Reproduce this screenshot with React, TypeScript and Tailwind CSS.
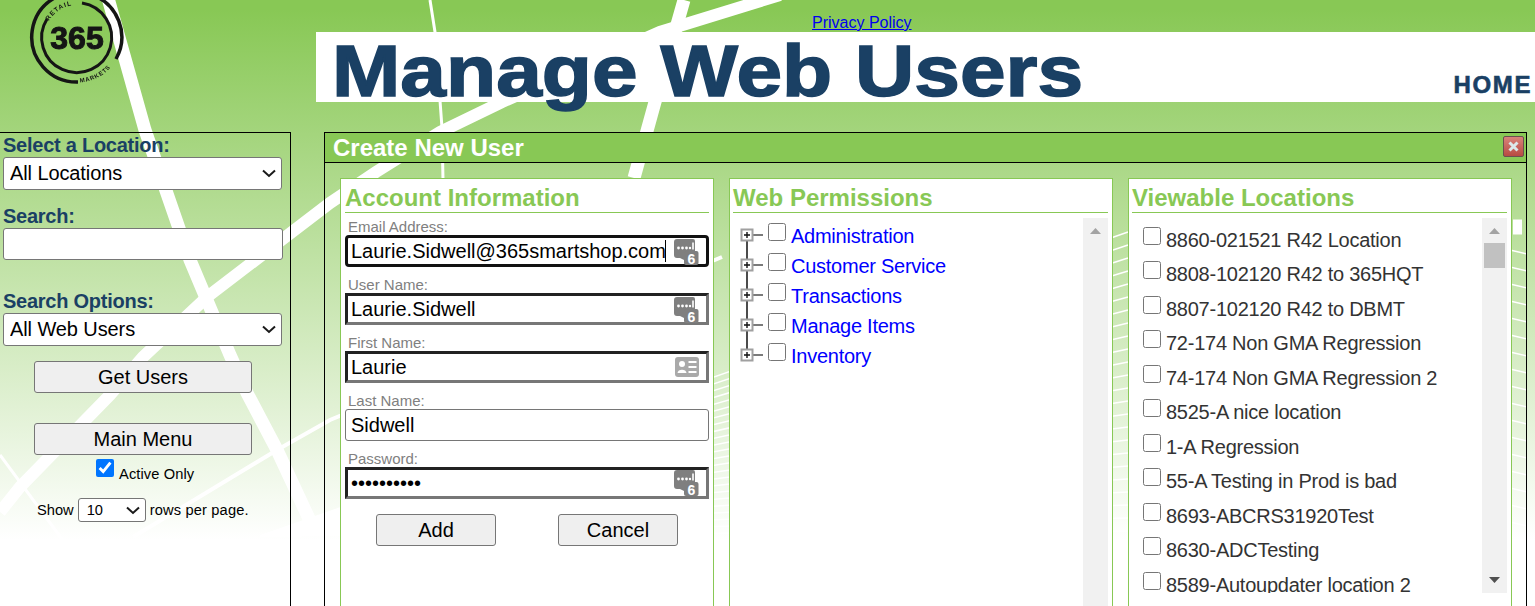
import React from 'react'

const tree = ['Administration', 'Customer Service', 'Transactions', 'Manage Items', 'Inventory']

const locations = [
  '8860-021521 R42 Location',
  '8808-102120 R42 to 365HQT',
  '8807-102120 R42 to DBMT',
  '72-174 Non GMA Regression',
  '74-174 Non GMA Regression 2',
  '8525-A nice location',
  '1-A Regression',
  '55-A Testing in Prod is bad',
  '8693-ABCRS31920Test',
  '8630-ADCTesting',
  '8589-Autoupdater location 2',
]

const fanLeft = Array.from({ length: 24 }, (_, i) => 232 + i * 13)
const fanRight = Array.from({ length: 20 }, (_, i) => 250 + i * 17)

function Background() {
  return (
    <svg className="absolute inset-0" width="1535" height="606" viewBox="0 0 1535 606" fill="none" stroke="#fff">
      <path d="M108 -2 L145 130 L190 260 L230 355 L247 393 L277 450 L312 525" strokeWidth="13" />
      <path d="M0 512 L20 487 L110 395 L143 357 L207 297 L330 203 L376 172 L440 132 L502 102 L660 32 L780 -5" strokeWidth="12" />
      <path d="M430 0 L435 32 L442 128 L443 180" strokeWidth="3" />
      <path d="M684 0 L655 102 L634 178" strokeWidth="13" />
      <path d="M0 455 L70 550" strokeWidth="3" />
      <path d="M133 537 L277 450 L330 420 L722 257" strokeWidth="4" />
      <path d="M1513 227 L1522 227" strokeWidth="15" />
      {fanLeft.map((y) => (
        <line key={y} x1="260" y1="536" x2="1128" y2={y} strokeWidth="1.5" />
      ))}
      {fanRight.map((y) => (
        <line key={y} x1="1510" y1={y} x2="1527" y2={y + 4} strokeWidth="1.5" />
      ))}
    </svg>
  )
}

function Logo() {
  return (
    <svg width="130" height="90" viewBox="0 0 130 90" className="block blur-[0.4px]" fill="none" stroke="#151515">
      <path d="M116 60 A45 45 0 1 0 78 83" strokeWidth="3.5" />
      <path d="M82 4 A35 35 0 1 1 47 20" strokeWidth="3" />
      <path id="retailArc" d="M49 22 A32 32 0 0 1 80 6" stroke="none" />
      <path id="marketsArc" d="M80 83.5 A45 45 0 0 0 116 61" stroke="none" />
      <text fontSize="6.5" fontWeight="700" fill="#151515" stroke="none" letterSpacing="1">
        <textPath href="#retailArc">RETAIL</textPath>
      </text>
      <text fontSize="6" fontWeight="700" fill="#151515" stroke="none" letterSpacing="0.8">
        <textPath href="#marketsArc">MARKETS</textPath>
      </text>
      <text x="77" y="50" textAnchor="middle" fontSize="32" fontWeight="700" fill="#151515" stroke="#151515" strokeWidth="1">
        365
      </text>
    </svg>
  )
}

function SixIcon({ className }: { className: string }) {
  return (
    <svg width="25" height="30" viewBox="0 0 25 30" className={className}>
      <path d="M3 1 H19 a2 2 0 0 1 2 2 V18 H10 V22 L6 20 H3 a3 3 0 0 1 -3 -3 V4 a3 3 0 0 1 3 -3 Z" fill="#7f7f7f" />
      <rect x="10" y="13" width="14.5" height="14" rx="2" fill="#7f7f7f" />
      <circle cx="4.5" cy="10" r="1.4" fill="#fff" />
      <circle cx="8.5" cy="10" r="1.4" fill="#fff" />
      <circle cx="12.5" cy="10" r="1.4" fill="#fff" />
      <circle cx="16" cy="10" r="1.2" fill="#fff" />
      <rect x="18.2" y="4.5" width="1.6" height="7" fill="#fff" />
      <text x="17.5" y="25.5" textAnchor="middle" fontSize="14" fontWeight="700" fill="#fff">6</text>
    </svg>
  )
}

function CardIcon({ className }: { className: string }) {
  return (
    <svg width="25" height="21" viewBox="0 0 25 21" className={className}>
      <rect x="0" y="0" width="24" height="20" rx="3" fill="#a9a9a9" />
      <circle cx="7" cy="7" r="3" fill="#fff" />
      <path d="M2.5 16 C2.5 11.5 11.5 11.5 11.5 16 Z" fill="#fff" />
      <rect x="13.5" y="4" width="8" height="2" fill="#fff" />
      <rect x="13.5" y="9" width="8" height="2" fill="#fff" />
      <rect x="13.5" y="14" width="8" height="2" fill="#fff" />
    </svg>
  )
}

function Chevron({ className }: { className: string }) {
  return (
    <svg width="14" height="9" viewBox="0 0 14 9" fill="none" className={`absolute pointer-events-none ${className}`}>
      <path d="M1 1.5 L7 7 L13 1.5" stroke="#1a1a1a" strokeWidth="2" />
    </svg>
  )
}

function TreeNode({ first, last }: { first: boolean; last: boolean }) {
  return (
    <svg width="24" height="30" viewBox="0 0 24 30" className="shrink-0" fill="none">
      {!first && <line x1="7" y1="0" x2="7" y2="9" stroke="#111" strokeWidth="1.5" />}
      {!last && <line x1="7" y1="21" x2="7" y2="30" stroke="#111" strokeWidth="1.5" />}
      <line x1="13" y1="15" x2="23" y2="15" stroke="#222" strokeWidth="1.2" />
      <rect x="1.5" y="9.5" width="11" height="11" fill="#fff" stroke="#a0a0a0" strokeWidth="2" />
      <path d="M4 15 H10 M7 12 V18" stroke="#111" strokeWidth="1.4" />
    </svg>
  )
}

function Scrollbar({ thumb }: { thumb?: boolean }) {
  return (
    <div className="w-[25px] shrink-0 bg-[#f1f1f1] flex flex-col items-center">
      <svg width="11" height="6" viewBox="0 0 11 6" className="mt-[10px] shrink-0">
        <path d="M5.5 0 L11 6 H0 Z" fill="#a3a3a3" />
      </svg>
      {thumb && <div className="mt-[9px] w-[21px] h-[25px] bg-[#c1c1c1]" />}
      <svg width="11" height="6" viewBox="0 0 11 6" className="mt-auto mb-[10px] shrink-0">
        <path d="M0 0 H11 L5.5 6 Z" fill="#505050" />
      </svg>
    </div>
  )
}

function Heading({ children }: { children: React.ReactNode }) {
  return (
    <h2 className="h-[34px] pt-[4px] border-b border-[#88c855] text-[24px] leading-[30px] font-bold text-[#88c855]">
      {children}
    </h2>
  )
}

function Field({ label, children }: { label: string; children: React.ReactNode }) {
  return (
    <div>
      <div className="h-[17px] pl-[3px] text-[15px] leading-[18px] text-[#808080]">{label}</div>
      <div className="relative h-[32px]">{children}</div>
    </div>
  )
}

const insetInput =
  'w-full h-full pl-[3px] pr-[40px] text-[20px] text-black bg-white outline-none border-[3px] border-t-[#222] border-l-[#222] border-r-[#777] border-b-[#777]'
const sideButton =
  'ml-[31px] w-[218px] h-[32px] pb-[4px] bg-[#efefef] border border-[#767676] rounded-[3px] text-[20px] text-black'
const formButton = 'w-[120px] h-[32px] bg-[#efefef] border border-[#767676] rounded-[3px] text-[20px] text-black'
const label = 'h-[24px] text-[20px] leading-[24px] font-bold tracking-[-0.25px] text-[#1a4064]'
const sideSelect =
  'w-[279px] h-[33px] pl-[6px] pb-[2px] appearance-none bg-white border border-[#767676] rounded-[3px] text-[20px] tracking-[-0.1px] text-black'

export default function App() {
  return (
    <div className="relative h-[606px] w-[1535px] overflow-hidden bg-[linear-gradient(180deg,#88c855_10px,#ffffff_540px)] font-['Liberation_Sans',Arial,sans-serif]">
      <Background />
      <div className="relative">
        <header className="flex h-[102px]">
          <div className="w-[316px] shrink-0 overflow-hidden">
            <div className="-mt-px">
              <Logo />
            </div>
          </div>
          <div className="flex-1 flex flex-col">
            <div className="h-[32px] pl-[496px] flex items-start">
              <a href="#" className="mt-[13px] text-[16px] leading-[19px] text-[#0000ee] underline">
                Privacy Policy
              </a>
            </div>
            <div className="h-[70px] bg-white flex justify-between pl-[16px] pr-[3px]">
              <h1 className="origin-left scale-x-[1.14] [-webkit-text-stroke:1.5px_#1a4064] text-[72px] leading-[78px] font-bold text-[#1a4064] whitespace-nowrap">
                Manage Web Users
              </h1>
              <a href="#" className="self-end mb-[3px] [-webkit-text-stroke:0.6px_#1a4064] text-[24px] leading-[28px] font-bold tracking-[1.6px] text-[#1a4064]">
                HOME
              </a>
            </div>
          </div>
        </header>

        <div className="flex mt-[30px] h-[520px]">
          <aside className="w-[291px] shrink-0 border-t border-r border-black pl-[3px] flex flex-col items-start">
            <div className={label}>Select a Location:</div>
            <div className="relative">
              <select className={sideSelect}>
                <option>All Locations</option>
              </select>
              <Chevron className="left-[259px] top-[12px]" />
            </div>
            <div className={`${label} mt-[14px]`}>Search:</div>
            <input className="w-[280px] h-[32px] bg-white border border-[#767676] rounded-[3px] outline-none" />
            <div className={`${label} mt-[29px]`}>Search Options:</div>
            <div className="relative">
              <select className={sideSelect}>
                <option>All Web Users</option>
              </select>
              <Chevron className="left-[259px] top-[12px]" />
            </div>
            <button className={`${sideButton} mt-[15px]`}>Get Users</button>
            <button className={`${sideButton} mt-[30px]`}>Main Menu</button>
            <div className="mt-[4px] ml-[93px] flex items-start">
              <input type="checkbox" defaultChecked className="w-[18px] h-[18px] m-0" />
              <span className="ml-[5px] mt-[6px] text-[14.67px] leading-[18px] tracking-[0.1px] text-black">Active Only</span>
            </div>
            <div className="mt-[15px] ml-[34px] flex items-center text-[14.67px] text-black">
              <span>Show</span>
              <div className="relative mx-[4px]">
                <select className="block w-[68px] h-[24px] pl-[8px] pb-[2px] appearance-none bg-white border border-[#767676] rounded-[3px] text-[14.67px]">
                  <option>10</option>
                </select>
                <Chevron className="left-[48px] top-[8px]" />
              </div>
              <span className="tracking-[0.15px]">rows per page.</span>
            </div>
          </aside>

          <main className="ml-[33px] w-[1203px] border border-black flex flex-col">
            <div className="h-[30px] shrink-0 bg-[#88c855] border-b border-black flex items-center justify-between pl-[8px] pr-[2px]">
              <span className="text-[24px] leading-[28px] font-bold text-white">Create New User</span>
              <button className="mb-[2px] w-[21px] h-[21px] rounded-[2px] border border-[#6b4f4f] bg-[linear-gradient(180deg,#d9837a,#b84a42)] flex items-center justify-center">
                <svg width="13" height="13" viewBox="0 0 13 13" fill="none">
                  <path d="M2.5 2.5 L10.5 10.5 M10.5 2.5 L2.5 10.5" stroke="#dce9ea" strokeWidth="3" />
                </svg>
              </button>
            </div>
            <div className="flex-1 flex gap-[15px] pl-[15px] pt-[15px]">
              <section className="w-[374px] bg-white border border-[#88c855] pl-[4px] pr-[4px]">
                <Heading>Account Information</Heading>
                <div className="pt-[5px] flex flex-col gap-[9px]">
                  <Field label="Email Address:">
                    <input
                      defaultValue="Laurie.Sidwell@365smartshop.com"
                      className="w-full h-full pl-[3px] pr-[40px] text-[20px] text-black bg-white outline-none border-[3px] border-[#111] rounded-[4px]"
                    />
                    <span className="absolute left-[320px] top-[5px] h-[22px] w-px bg-black" />
                    <SixIcon className="absolute right-[10px] top-[3px]" />
                  </Field>
                  <Field label="User Name:">
                    <input defaultValue="Laurie.Sidwell" className={insetInput} />
                    <SixIcon className="absolute right-[10px] top-[3px]" />
                  </Field>
                  <Field label="First Name:">
                    <input defaultValue="Laurie" className={insetInput} />
                    <CardIcon className="absolute right-[9px] top-[6px]" />
                  </Field>
                  <Field label="Last Name:">
                    <input
                      defaultValue="Sidwell"
                      className="w-full h-full pl-[5px] text-[20px] text-black bg-white outline-none border border-[#767676] rounded-[3px]"
                    />
                  </Field>
                  <Field label="Password:">
                    <input type="password" defaultValue="Password12" className={insetInput} />
                    <SixIcon className="absolute right-[10px] top-[2px]" />
                  </Field>
                </div>
                <div className="mt-[15px] pl-[31px] flex gap-[62px]">
                  <button className={formButton}>Add</button>
                  <button className={formButton}>Cancel</button>
                </div>
              </section>

              <section className="w-[384px] bg-white border border-[#88c855] pl-[3px] pr-[4px]">
                <Heading>Web Permissions</Heading>
                <div className="mt-[5px] h-[420px] flex">
                  <div className="flex-1 pl-[7px] pt-[2px]">
                    {tree.map((name, i) => (
                      <div key={name} className="flex items-start h-[30px]">
                        <TreeNode first={i === 0} last={i === tree.length - 1} />
                        <input type="checkbox" className="ml-[4px] mt-[3px] w-[18px] h-[18px] shrink-0" />
                        <a href="#" className="ml-[5px] text-[20px] leading-[32px] tracking-[-0.25px] text-[#0000ff]">
                          {name}
                        </a>
                      </div>
                    ))}
                  </div>
                  <Scrollbar />
                </div>
              </section>

              <section className="w-[384px] bg-white border border-[#88c855] pl-[3px] pr-[4px]">
                <Heading>Viewable Locations</Heading>
                <div className="mt-[5px] h-[375px] flex">
                  <div className="flex-1 pl-[11px] pt-[4.7px] overflow-hidden">
                    {locations.map((name) => (
                      <div key={name} className="flex items-start h-[34.5px]">
                        <input type="checkbox" className="mt-[4px] w-[18px] h-[18px] shrink-0" />
                        <span className="ml-[5px] text-[20px] leading-[34px] tracking-[-0.25px] text-[#333] whitespace-nowrap">{name}</span>
                      </div>
                    ))}
                  </div>
                  <Scrollbar thumb />
                </div>
              </section>
            </div>
          </main>
        </div>
      </div>
    </div>
  )
}
